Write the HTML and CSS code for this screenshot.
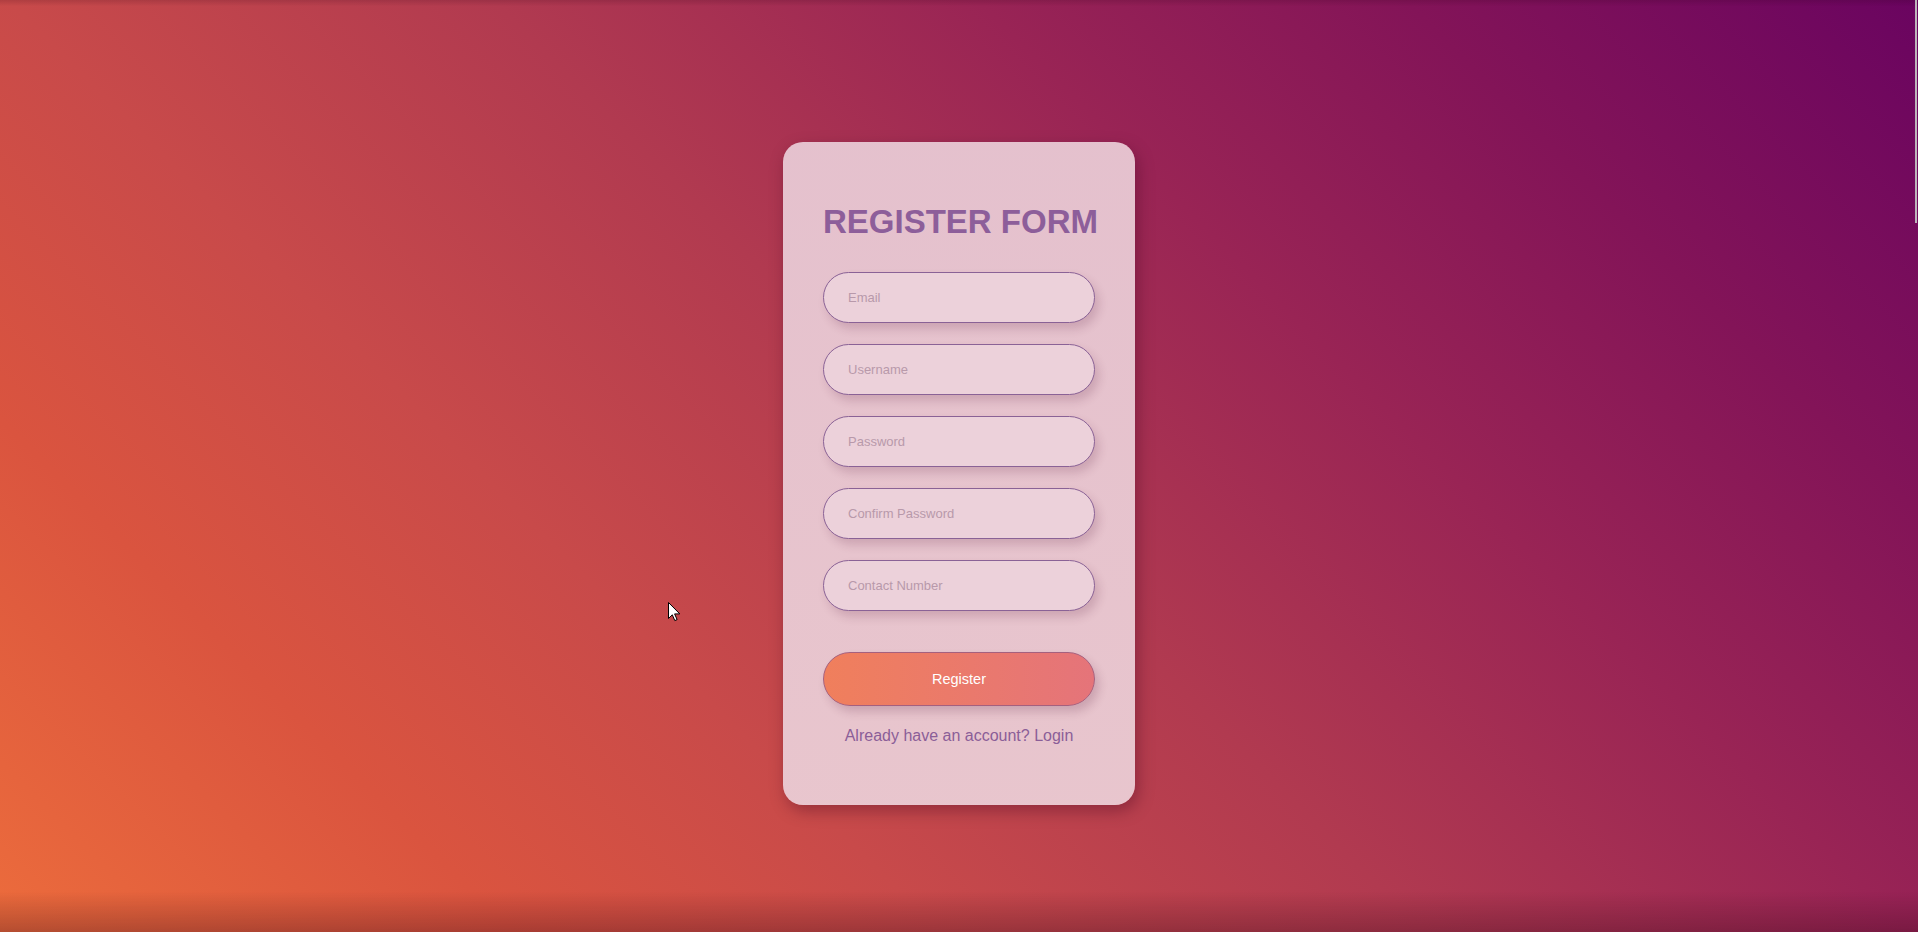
FILE: index.html
```html
<!DOCTYPE html>
<html lang="en">
<head>
<meta charset="utf-8">
<title>Register Form</title>
<link rel="stylesheet" href="styles.css">
</head>
<body>
<main class="page">
  <form class="card">
    <h2 class="title">REGISTER FORM</h2>
    <div class="fields">
      <input class="field" type="email" placeholder="Email">
      <input class="field" type="text" placeholder="Username">
      <input class="field" type="password" placeholder="Password">
      <input class="field" type="password" placeholder="Confirm Password">
      <input class="field" type="tel" placeholder="Contact Number">
    </div>
    <button class="btn" type="button">Register</button>
    <a class="login" href="#">Already have an account? Login</a>
  </form>
</main>
<div class="shade-bottom"></div>
<div class="shade-top"></div>
<div class="scroll-thumb"></div>
<svg class="cursor" width="13" height="20" viewBox="0 0 13 20">
  <path d="M0.5 0.5 L0.5 16.5 L4.3 12.8 L6.8 18.6 L9.1 17.6 L6.6 11.9 L11.8 11.9 Z" fill="#fff" stroke="#000" stroke-width="1"/>
</svg>
</body>
</html>
```

FILE: styles.css
```css
* { box-sizing: border-box; }

html, body {
  margin: 0;
  height: 100%;
}

body {
  font-family: "Liberation Sans", Arial, sans-serif;
  background: linear-gradient(45deg, #ec6c3c 0%, #da543f 18%, #c84a4a 33%, #b13a50 50%, #992455 67%, #831458 82%, #6a0460 100%);
  overflow: hidden;
}

.page {
  min-height: 100vh;
  display: flex;
  justify-content: center;
  align-items: center;
  padding-top: 15px;
}

.card {
  width: 352px;
  padding: 61px 40px 60px;
  border-radius: 20px;
  background: linear-gradient(180deg, rgba(230, 196, 208, 0.98), rgba(233, 200, 208, 0.98));
  box-shadow: 3px 6px 16px rgba(60, 0, 30, 0.35);
  display: flex;
  flex-direction: column;
  align-items: stretch;
}

.title {
  margin: 0 0 32px;
  text-align: center;
  font-size: 33px;
  font-weight: 700;
  line-height: 37px;
  color: #8d5e9a;
  white-space: nowrap;
}

.fields {
  display: flex;
  flex-direction: column;
  gap: 21px;
}

.field {
  height: 51px;
  width: 100%;
  border: 1px solid #8a6296;
  border-radius: 26px;
  background: #ecd1da;
  padding: 0 24px;
  font-family: "Liberation Sans", Arial, sans-serif;
  font-size: 13px;
  color: #7a5a80;
  outline: none;
  box-shadow: 4px 6px 10px rgba(90, 30, 60, 0.18);
}

.field::placeholder {
  color: #b899aa;
}

.btn {
  margin-top: 41px;
  height: 54px;
  width: 100%;
  border: 1px solid #a5607e;
  border-radius: 27px;
  background: linear-gradient(90deg, #f07f5c, #e5747a);
  color: #fff;
  font-family: "Liberation Sans", Arial, sans-serif;
  font-size: 14.5px;
  box-shadow: 4px 6px 10px rgba(90, 30, 60, 0.2);
  cursor: pointer;
}

.login {
  margin-top: 21px;
  text-align: center;
  font-size: 16px;
  line-height: 18px;
  color: #8b5e98;
  text-decoration: none;
}

.shade-bottom {
  position: fixed;
  left: 0;
  right: 0;
  bottom: 0;
  height: 40px;
  background: linear-gradient(to top, rgba(40, 0, 20, 0.28), rgba(40, 0, 20, 0));
  pointer-events: none;
}

.shade-top {
  position: fixed;
  left: 0;
  right: 0;
  top: 0;
  height: 6px;
  background: linear-gradient(to bottom, rgba(40, 0, 20, 0.15), rgba(40, 0, 20, 0));
  pointer-events: none;
}

.scroll-thumb {
  position: fixed;
  top: 0;
  right: 1px;
  width: 2px;
  height: 223px;
  background: #bdb4bb;
}

.cursor {
  position: fixed;
  left: 668px;
  top: 602px;
}
```
